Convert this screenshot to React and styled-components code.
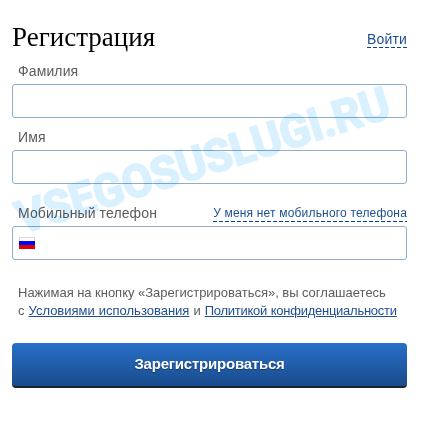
import React from 'react'
import styled, { createGlobalStyle } from 'styled-components';


function App() {
  return (
    <>
      <GlobalStyle />
      <Page>
        <Header>
          <Title>Регистрация</Title>
          <DashedLink href="#" $size={14} $spacing={0.15}>Войти</DashedLink>
        </Header>
        <Field $height={66}>
          <LabelRow>
            <Label htmlFor="surname">Фамилия</Label>
          </LabelRow>
          <Input id="surname" type="text" />
        </Field>
        <Field $height={76}>
          <LabelRow>
            <Label htmlFor="name">Имя</Label>
          </LabelRow>
          <Input id="name" type="text" />
        </Field>
        <Field $height={80}>
          <LabelRow>
            <Label htmlFor="phone">Мобильный телефон</Label>
            <DashedLink href="#" $size={12} $spacing={0.18}>У меня нет мобильного телефона</DashedLink>
          </LabelRow>
          <PhoneBox>
            <Flag />
            <PhoneInput id="phone" type="tel" />
          </PhoneBox>
        </Field>
        <Terms>
          <TermsLine $gap={-0.2}>Нажимая на кнопку «Зарегистрироваться», вы соглашаетесь</TermsLine>
          <TermsLine $gap={0.4}>
            с <TermsLink href="#" $spacing={0}>Условиями использования</TermsLink> и <TermsLink href="#" $spacing={-0.26}>Политикой конфиденциальности</TermsLink>
          </TermsLine>
        </Terms>
        <Submit type="button">Зарегистрироваться</Submit>
        <Watermark viewBox="0 0 426 442" aria-hidden="true">
          <text transform="translate(22 234) rotate(-17.6)" textLength="389" lengthAdjust="spacingAndGlyphs">VSEGOSUSLUGI.RU</text>
        </Watermark>
      </Page>
    </>
  )
}

const GlobalStyle = createGlobalStyle`
  * {
    box-sizing: border-box;
  }
  body {
    margin: 0;
    background: #fff;
    font-family: "Liberation Sans", Arial, sans-serif;
  }
`;
const Page = styled.form`
  position: relative;
  width: 426px;
  height: 442px;
  padding: 22px 19px 0 12px;
  overflow: hidden;
`;
const Header = styled.header`
  display: flex;
  justify-content: space-between;
  align-items: flex-start;
  height: 40px;
  & > a {
    margin-top: 8px;
    line-height: 19px;
  }
`;
const Title = styled.h1`
  margin: 0;
  font: 400 27px/30px Georgia, "Liberation Serif", serif;
  color: #000;
`;
const DashedLink = styled.a`
  height: 18px;
  font-size: ${(props) => props.$size}px;
  line-height: 18px;
  letter-spacing: ${(props) => props.$spacing}px;
  white-space: nowrap;
  color: #1d4f91;
  text-decoration: none;
  background: repeating-linear-gradient(90deg, #004590 0 4px, transparent 4px 6px) left bottom / 100% 1px no-repeat;
`;
const Field = styled.div`
  height: ${(props) => props.$height}px;
  display: flex;
  flex-direction: column;
`;
const LabelRow = styled.div`
  display: flex;
  justify-content: space-between;
  align-items: flex-start;
  flex: none;
  height: 22px;
  padding-left: 6px;
`;
const Label = styled.label`
  font-size: 14px;
  line-height: 18px;
  letter-spacing: 0.12px;
  color: #5c5c5c;
`;
const Input = styled.input`
  width: 100%;
  height: 34px;
  padding: 0 8px;
  border: 1px solid #8eaed0;
  border-radius: 3px;
  background: #fff;
  outline: none;
`;
const PhoneBox = styled.div`
  display: flex;
  align-items: center;
  height: 34px;
  padding: 0 6px;
  border: 1px solid #8eaed0;
  border-radius: 3px;
`;
const Flag = styled.span`
  width: 16px;
  height: 12px;
  background:
    linear-gradient(#fff, #fff) 1px 1px / 14px 3px no-repeat,
    linear-gradient(#d9d9d9 0 4px, #00f 4px 8px, #e00000 8px);
`;
const PhoneInput = styled.input`
  flex: 1;
  border: 0;
  outline: none;
  background: transparent;
`;
const Terms = styled.div`
  height: 59px;
  padding-left: 6px;
  font-size: 13px;
  line-height: 18px;
  color: #5c5c5c;
`;
const TermsLine = styled.div`
  word-spacing: ${(props) => props.$gap}px;
  white-space: nowrap;
`;
const TermsLink = styled.a`
  letter-spacing: ${(props) => props.$spacing}px;
  color: #1d4f91;
  text-decoration: underline;
`;
const Submit = styled.button`
  display: block;
  width: 100%;
  height: 45px;
  padding: 0 0 2px;
  border: 0;
  border-bottom: 2px solid #1c222c;
  border-radius: 4px;
  background: linear-gradient(#286fc8, #1a4b8c);
  color: #fff;
  font: bold 15px/18px "Liberation Sans", Arial, sans-serif;
  letter-spacing: -0.22px;
  text-shadow: 0 1px 1px rgba(0, 0, 0, 0.4);
`;
const Watermark = styled.svg`
  position: absolute;
  inset: 0;
  width: 426px;
  height: 442px;
  pointer-events: none;
  mix-blend-mode: multiply;
  text {
    font: 700 45px Roboto, sans-serif;
    fill: #d9f0ff;
    stroke: #d9f0ff;
    stroke-width: 2px;
  }
`;
export default App
